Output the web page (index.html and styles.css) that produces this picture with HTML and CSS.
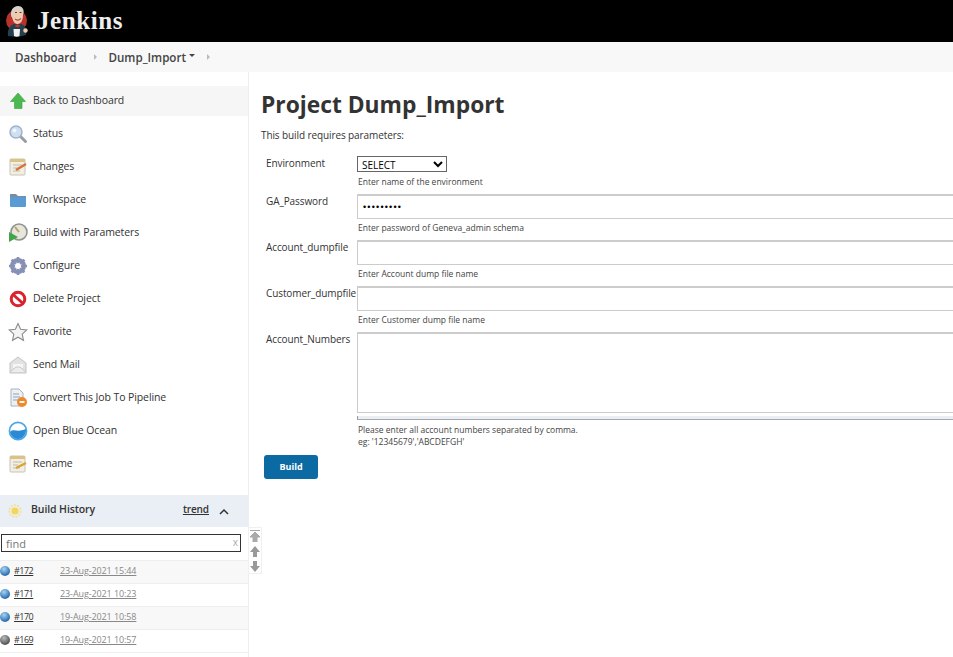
FILE: index.html
```html
<!DOCTYPE html>
<html lang="en">
<head>
    <meta charset="UTF-8">
    <meta name="viewport" content="width=device-width, initial-scale=1.0">
    <title>Dump_Import [Jenkins]</title>
    <link rel="stylesheet" href="styles.css">
</head>
<body>

    <!-- Header -->
    <header class="top-bar">
        <svg class="logo-icon" width="24" height="32" viewBox="0 0 24 32">
            <circle cx="11.500" cy="15.500" r="10.500" fill="#b8312c"/>
            <path d="M3 31 C2 25 5 20 9 19 H16 C20 20 22 24 21 30 L13 32 Z" fill="#24404f"/>
            <path d="M6.500 9 C6.500 4 9 2 12.500 2 C16 2 18.500 5 18 10 C18 15 16 19 12.500 19 C9 19 7 14 6.500 9 Z" fill="#efccb0"/>
            <path d="M6.500 12 C4.500 6 8 1 13 1 C17 1 19.500 4 18.500 9 C17.500 5.500 14 4.500 11 5 C9 5.500 8.500 9 8 12 Z" fill="#d6d2cb"/>
            <path d="M10 7.500 H12 M14.500 7.500 H16.500" stroke="#5a4030" stroke-width="1"/>
            <path d="M10 14 C12 15.500 14 15.500 16 13.500" fill="none" stroke="#a8574a" stroke-width="1.200"/>
            <path d="M9.500 21 L12.500 19 L15.500 21 L12.500 22.500 Z" fill="#c9302c"/>
            <path d="M8.500 24 H15 L14.500 31 C12.500 32 10.500 32 9 31 Z" fill="#f2f2f2"/>
            <circle cx="20.500" cy="25.500" r="2.200" fill="#efccb0"/>
        </svg>
        <span class="logo-text">Jenkins</span>
    </header>

    <!-- Breadcrumbs -->
    <nav class="breadcrumbs">
        <a class="crumb" href="#">Dashboard</a>
        <span class="crumb-sep"></span>
        <a class="crumb" href="#">Dump_Import</a>
        <span class="crumb-caret"></span>
        <span class="crumb-sep"></span>
    </nav>

    <div class="page">
        <!-- Side panel -->
        <aside class="side-panel">
            <ul class="tasks">
                <li class="task task-active">
                    <svg width="20" height="20" viewBox="0 0 20 20"><path d="M10 2 L17.500 10.500 H14 V17.500 H6.500 V10.500 H2.500 Z" fill="#4cb84f" stroke="#37a13c" stroke-width=".6"/></svg>
                    <span>Back to Dashboard</span>
                </li>
                <li class="task">
                    <svg width="20" height="20" viewBox="0 0 20 20"><path d="M12 12 L17.500 17.500" stroke="#9a9da3" stroke-width="3" stroke-linecap="round"/><circle cx="8" cy="8" r="6" fill="#cfdff0" stroke="#9db3cf" stroke-width="1.500"/><circle cx="6.500" cy="6.500" r="2" fill="#f0f6fb"/></svg>
                    <span>Status</span>
                </li>
                <li class="task">
                    <svg width="20" height="20" viewBox="0 0 20 20"><rect x="2" y="2" width="15" height="16" rx="1" fill="#f2efe2" stroke="#c8c5b6"/><rect x="2" y="2" width="15" height="3" fill="#d9c486"/><path d="M5 8 H14 M5 11 H10 M5 14 H12" stroke="#bdbaaa"/><path d="M8 13 L18 7" stroke="#d9703c" stroke-width="2.400"/></svg>
                    <span>Changes</span>
                </li>
                <li class="task">
                    <svg width="20" height="20" viewBox="0 0 20 20"><path d="M2 4 H8 L10 6 H18 V8 H2 Z" fill="#7c8da0"/><rect x="2" y="7" width="16" height="10" rx="1" fill="#5b9bd5"/></svg>
                    <span>Workspace</span>
                </li>
                <li class="task">
                    <svg width="20" height="20" viewBox="0 0 20 20"><circle cx="11" cy="9" r="8" fill="#e8e6da" stroke="#8f9490" stroke-width="1.600"/><path d="M11 9 L7 4" stroke="#b8a46a" stroke-width="2"/><path d="M1 19 V9 L10 14 Z" fill="#3fa648"/></svg>
                    <span>Build with Parameters</span>
                </li>
                <li class="task">
                    <svg width="20" height="20" viewBox="0 0 20 20"><circle cx="10" cy="10" r="6" fill="none" stroke="#8790b5" stroke-width="4"/><path d="M10 1 V19 M1 10 H19 M3.600 3.600 L16.400 16.400 M16.400 3.600 L3.600 16.400" stroke="#8790b5" stroke-width="2.600"/><circle cx="10" cy="10" r="3" fill="#fff"/></svg>
                    <span>Configure</span>
                </li>
                <li class="task">
                    <svg width="20" height="20" viewBox="0 0 20 20"><circle cx="10" cy="10" r="6.800" fill="#fff" stroke="#d9232e" stroke-width="3"/><path d="M5 5.500 L15 14.500" stroke="#d9232e" stroke-width="3"/></svg>
                    <span>Delete Project</span>
                </li>
                <li class="task">
                    <svg width="20" height="20" viewBox="0 0 20 20"><path d="M10 1.500 L12.600 7.200 L18.800 7.900 L14.200 12.100 L15.500 18.300 L10 15.200 L4.500 18.300 L5.800 12.100 L1.200 7.900 L7.400 7.200 Z" fill="#f4f4f4" stroke="#8c8c8c" stroke-width="1.100"/></svg>
                    <span>Favorite</span>
                </li>
                <li class="task">
                    <svg width="20" height="20" viewBox="0 0 20 20"><path d="M2 8 L10 2 L18 8 V18 H2 Z" fill="#e2e2e0" stroke="#c4c4c2"/><path d="M5 9 H15 V13 H5 Z" fill="#f6f6f5"/><path d="M2 17 L8 12 H12 L18 17" fill="#ececea" stroke="#c9c9c7"/></svg>
                    <span>Send Mail</span>
                </li>
                <li class="task">
                    <svg width="20" height="20" viewBox="0 0 20 20"><path d="M3 1 H11 L15 5 V18 H3 Z" fill="#eef1f4" stroke="#a9b2bb"/><path d="M5 6 H11 M5 9 H12 M5 12 H10" stroke="#8ba3bd"/><circle cx="14" cy="14" r="5" fill="#ec8a2e"/><path d="M11.500 14 H16.500" stroke="#fff" stroke-width="1.800"/></svg>
                    <span>Convert This Job To Pipeline</span>
                </li>
                <li class="task">
                    <svg width="20" height="20" viewBox="0 0 20 20"><circle cx="10" cy="10" r="8.600" fill="#fff" stroke="#4aa5e6" stroke-width="1.600"/><path d="M2 11 C6 7 9 12 18 8 C18.500 14 14 18 10 18 C6 18 3 15 2 11 Z" fill="#2a8ad6"/></svg>
                    <span>Open Blue Ocean</span>
                </li>
                <li class="task">
                    <svg width="20" height="20" viewBox="0 0 20 20"><rect x="2" y="2" width="15" height="16" rx="1" fill="#f2efe2" stroke="#c8c5b6"/><rect x="2" y="2" width="15" height="3" fill="#d9c486"/><path d="M5 8 H14 M5 11 H10 M5 14 H12" stroke="#bdbaaa"/><path d="M8 14 L18 9" stroke="#d9a23c" stroke-width="2.400"/></svg>
                    <span>Rename</span>
                </li>
            </ul>

            <!-- Build History -->
            <section class="build-history">
                <div class="history-header">
                    <svg class="history-sun" width="14" height="14" viewBox="0 0 14 14"><circle cx="7" cy="7" r="3.600" fill="#f7d55a"/><circle cx="7" cy="7" r="5.800" fill="none" stroke="#f5e29a" stroke-width="1.800" stroke-dasharray="2 1.200"/></svg>
                    <span class="history-title">Build History</span>
                    <a class="history-trend" href="#">trend</a>
                    <svg class="history-chevron" width="10" height="7" viewBox="0 0 10 7"><path d="M1 6 L5 2 L9 6" fill="none" stroke="#333" stroke-width="1.500"/></svg>
                </div>
                <div class="history-search">
                    <input type="text" class="find-input" placeholder="find">
                    <span class="find-clear">x</span>
                </div>
                <ul class="history-list">
                    <li class="history-row"><span class="ball ball-blue"></span><a class="build-no" href="#">#172</a><a class="build-date" href="#">23-Aug-2021 15:44</a></li>
                    <li class="history-row"><span class="ball ball-blue"></span><a class="build-no" href="#">#171</a><a class="build-date" href="#">23-Aug-2021 10:23</a></li>
                    <li class="history-row"><span class="ball ball-blue"></span><a class="build-no" href="#">#170</a><a class="build-date" href="#">19-Aug-2021 10:58</a></li>
                    <li class="history-row"><span class="ball ball-grey"></span><a class="build-no" href="#">#169</a><a class="build-date" href="#">19-Aug-2021 10:57</a></li>
                </ul>
            </section>

            <!-- Page scroll buttons -->
            <div class="scroll-btns">
                <svg width="10" height="12" viewBox="0 0 10 12"><path d="M0 0.500 H10 M5 2 L10 7 H7 V12 H3 V7 H0 Z" fill="#aaa" stroke="#aaa"/></svg>
                <svg width="10" height="11" viewBox="0 0 10 11"><path d="M5 0 L10 6 H7 V11 H3 V6 H0 Z" fill="#999"/></svg>
                <svg width="10" height="11" viewBox="0 0 10 11"><path d="M3 0 H7 V5 H10 L5 11 L0 5 H3 Z" fill="#999"/></svg>
            </div>
        </aside>

        <!-- Main panel -->
        <main class="main-panel">
            <h1>Project Dump_Import</h1>
            <p class="intro">This build requires parameters:</p>

            <form class="params">
                <div class="param">
                    <label>Environment</label>
                    <div class="param-field">
                        <select class="param-select"><option>SELECT</option></select>
                        <div class="hint">Enter name of the environment</div>
                    </div>
                </div>
                <div class="param">
                    <label>GA_Password</label>
                    <div class="param-field">
                        <input type="password" class="param-input param-password" value="123456789">
                        <div class="hint">Enter password of Geneva_admin schema</div>
                    </div>
                </div>
                <div class="param">
                    <label>Account_dumpfile</label>
                    <div class="param-field">
                        <input type="text" class="param-input">
                        <div class="hint">Enter Account dump file name</div>
                    </div>
                </div>
                <div class="param">
                    <label>Customer_dumpfile</label>
                    <div class="param-field">
                        <input type="text" class="param-input">
                        <div class="hint">Enter Customer dump file name</div>
                    </div>
                </div>
                <div class="param">
                    <label>Account_Numbers</label>
                    <div class="param-field">
                        <textarea class="param-textarea"></textarea>
                        <div class="textarea-grip"></div>
                        <div class="hint hint-multi">Please enter all account numbers separated by comma.<br>eg: '12345679','ABCDEFGH'</div>
                    </div>
                </div>
                <button type="button" class="build-btn">Build</button>
            </form>
        </main>
    </div>

</body>
</html>
```

FILE: styles.css
```css
html, body {
    height: 100%;
}
body {
    font-family: "Open Sans", Arial, sans-serif;
    font-size: 10.5px;
    letter-spacing: -0.1px;
    margin: 0;
    padding: 0;
    background-color: #fff;
    color: #333;
    overflow: hidden;
}
a {
    color: inherit;
}
ul {
    list-style-type: none;
    margin: 0;
    padding: 0;
}
.top-bar {
    height: 42px;
    background-color: #000;
    display: flex;
    align-items: center;
    padding-left: 5px;
    box-sizing: border-box;
}
.logo-icon {
    margin-right: 8px;
}
.logo-text {
    font-family: "Liberation Serif", serif;
    font-weight: bold;
    font-size: 25px;
    letter-spacing: 0.6px;
    color: #eee;
}
.breadcrumbs {
    height: 30px;
    background-color: #f8f8f8;
    display: flex;
    align-items: center;
    padding-left: 15px;
    box-sizing: border-box;
}
.crumb {
    font-size: 11.600px;
    font-weight: 600;
    letter-spacing: 0;
    color: #444;
    text-decoration: none;
}
.crumb-sep {
    width: 0;
    height: 0;
    border-left: 3px solid #bbb;
    border-top: 3px solid transparent;
    border-bottom: 3px solid transparent;
    margin: 0 11px 0 18px;
}
.crumb-caret {
    width: 0;
    height: 0;
    border-top: 3px solid #444;
    border-left: 3px solid transparent;
    border-right: 3px solid transparent;
    margin-left: 3px;
    margin-bottom: 3px;
}
.crumb-caret + .crumb-sep {
    margin-left: 12px;
}
.page {
    display: flex;
    height: calc(100% - 72px);
}

/* side panel */
.side-panel {
    position: relative;
    flex: 0 0 248px;
    border-right: 1px solid #eee;
    padding-top: 14px;
}
.task {
    height: 33px;
    display: flex;
    align-items: center;
    gap: 5px;
    padding-left: 8px;
    box-sizing: border-box;
}
.task span {
    padding-bottom: 2px;
}
.task-active {
    background-color: #f6f6f6;
    height: 30px;
    margin-bottom: 1px;
}
.tasks {
    margin-bottom: 15px;
}
.history-header {
    height: 32px;
    background-color: #e9eff4;
    display: flex;
    align-items: center;
    padding-left: 8px;
}
.history-title {
    font-weight: 600;
    margin-left: 9px;
    padding-bottom: 4px;
}
.history-trend {
    font-size: 10px;
    font-weight: 600;
    margin-left: auto;
    padding-bottom: 4px;
}
.history-chevron {
    margin: 0 19px 0 10px;
}
.history-search {
    position: relative;
    padding: 7px 7px 8px 1px;
    border-bottom: 1px solid #eee;
}
.find-input {
    display: block;
    width: 100%;
    height: 18px;
    box-sizing: border-box;
    border: 1px solid #333;
    padding: 0 4px;
    font-family: inherit;
    font-size: 11px;
}
.find-clear {
    position: absolute;
    right: 10px;
    top: 8px;
    color: #aaa;
    font-size: 10px;
}
.history-row {
    height: 23px;
    display: flex;
    align-items: center;
    border-bottom: 1px solid #eee;
    box-sizing: border-box;
    font-size: 9px;
    letter-spacing: -0.1px;
}
.history-row a {
    padding-bottom: 4px;
}
.history-row:nth-child(odd) {
    background-color: #f8f8f8;
}
.ball {
    width: 10px;
    height: 10px;
    border-radius: 50%;
    margin: 0 4px 2px 0;
}
.ball-blue {
    background: radial-gradient(circle at 40% 30%, #a9d2f2, #2a6fb0 70%);
}
.ball-grey {
    background: radial-gradient(circle at 40% 30%, #bbb, #555 70%);
}
.build-no {
    width: 46px;
    letter-spacing: -0.5px;
}
.build-date {
    color: #888;
}
.scroll-btns {
    position: absolute;
    left: 248px;
    top: 455px;
    width: 14px;
    height: 47px;
    box-sizing: border-box;
    padding-top: 2px;
    background-color: #fff;
    border: 1px solid #f0f0f0;
    display: flex;
    flex-direction: column;
    align-items: center;
    gap: 4px;
}

/* main panel */
.main-panel {
    flex: 1;
    padding: 19px 0 0 12px;
    overflow: hidden;
}
h1 {
    font-size: 22.800px;
    font-weight: 700;
    letter-spacing: 0;
    line-height: 27px;
    margin: 0;
    color: #333;
}
.intro {
    margin: 10px 0 13px;
    font-size: 10px;
    line-height: 15px;
}
.params {
    width: 800px;
}
.param {
    display: flex;
    padding-left: 5px;
}
.param label {
    flex: 0 0 91px;
    min-width: 0;
    font-size: 10px;
    white-space: nowrap;
    line-height: 14px;
}
.param-field {
    flex: 1;
}
.param-select {
    display: block;
    width: 90px;
    height: 16px;
    margin-bottom: 4px;
    font-family: inherit;
    font-size: 10px;
    border: 1px solid #666;
    background-color: #fff;
}
.param-input {
    display: block;
    width: 100%;
    height: 25px;
    box-sizing: border-box;
    border: 1px solid #ccc;
    border-top-width: 2px;
    padding: 0 5px;
}
.param-password {
    font-size: 9px;
    letter-spacing: 1.200px;
}
.param-textarea {
    display: block;
    width: 100%;
    height: 81px;
    box-sizing: border-box;
    border: 1px solid #ccc;
    border-top-width: 2px;
    resize: none;
}
.textarea-grip {
    height: 4px;
    margin-top: 3px;
    background-color: #e9eff4;
    border-bottom: 1px solid #aaa;
    border-left: 1px solid #999;
    box-sizing: border-box;
}
.hint {
    font-size: 8.500px;
    line-height: 12px;
    letter-spacing: 0;
    color: #444;
    margin: 3px 0 6px 1px;
}
.hint-multi {
    margin-top: 4px;
}
.build-btn {
    display: block;
    width: 54px;
    height: 24px;
    margin: 1px 0 0 3px;
    padding: 0 0 1px;
    background-color: #0b6aa2;
    color: #fff;
    font-family: inherit;
    font-size: 9px;
    font-weight: 700;
    border: none;
    border-radius: 3px;
}
```
